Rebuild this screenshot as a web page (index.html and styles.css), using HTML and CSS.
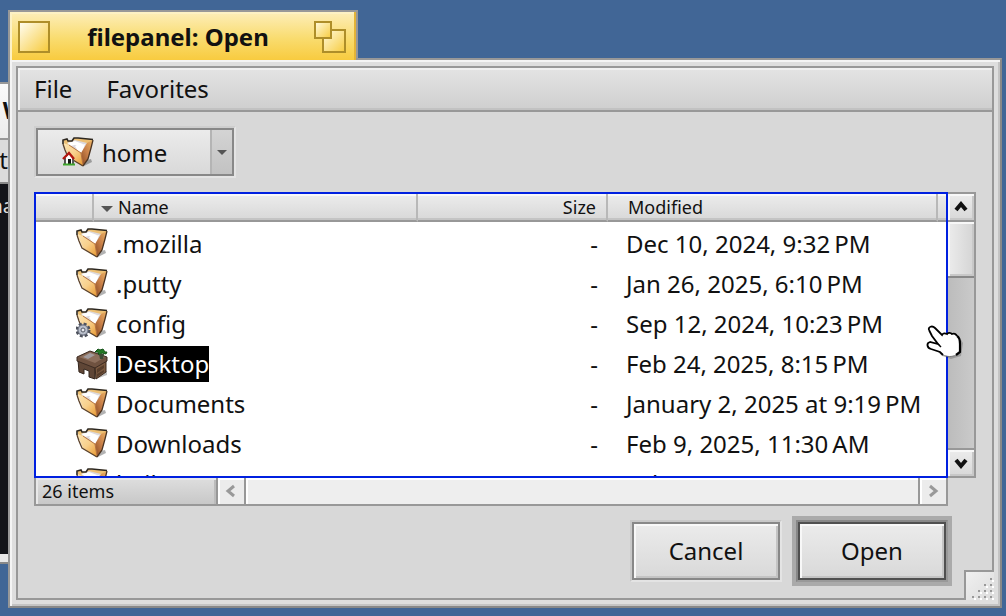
FILE: index.html
```html
<!DOCTYPE html>
<html lang="en">

<head>
    <meta charset="UTF-8">
    <meta name="viewport" content="width=device-width, initial-scale=1.0">
    <title>filepanel: Open</title>
    <link rel="stylesheet" href="styles.css">
</head>

<body>
    <!-- shared icons -->
    <svg class="defs" width="0" height="0" aria-hidden="true">
        <defs>
            <linearGradient id="front" x1="0" y1="0" x2="1" y2="1">
                <stop offset="0" stop-color="#fde6b4" />
                <stop offset="0.5" stop-color="#f8d08c" />
                <stop offset="1" stop-color="#e8962c" />
            </linearGradient>
            <linearGradient id="side" x1="1" y1="0" x2="0" y2="1">
                <stop offset="0" stop-color="#efb766" />
                <stop offset="0.5" stop-color="#c98049" />
                <stop offset="1" stop-color="#8a4a22" />
            </linearGradient>
            <symbol id="folder" viewBox="0 0 32 32">
                <path d="M22 29l8-4-1-3-4 1z" fill="#000" opacity="0.3" />
                <path d="M1 3l4-1 1 2 4 0 2-3 19 1-2 8-3 12-5 7-13-9-4-9z" fill="#edc074" />
                <path d="M5 6l8-3 12 3-4 16-6-6z" fill="#dcd9de" />
                <path d="M6 6l7-2 8 3-2 4-6-3-5 1z" fill="#fff" />
                <path d="M13 9l10-2-4 12z" fill="#fff" />
                <path d="M31 3l-6 3-6 10 2 12 5-6z" fill="url(#side)" />
                <path d="M1 6l6 2 12 8 2 13-14-9z" fill="url(#front)" />
                <path d="M7 8l12 8 2 12" fill="none" stroke="#b4713f" stroke-width="1" />
                <path d="M1 7V3l4-1 1 2 4 0 2-3 4 0 15 1.500" fill="none" stroke="#2c2720" stroke-width="1.6" />
                <path d="M31 3l-2 8-3 11-5 7" fill="none" stroke="#4a3322" stroke-width="1.3" />
                <path d="M1 7l2 6 3 7 15 9" fill="none" stroke="#5b4129" stroke-width="1.3" />
            </symbol>
            <symbol id="gear" viewBox="0 0 32 32">
                <circle cx="7" cy="22" r="6" fill="#a9afbd" stroke="#4d515c" stroke-width="3" stroke-dasharray="2.8 1.9" />
                <circle cx="7" cy="22" r="5" fill="#b9bfcb" stroke="#6d7280" stroke-width="1" />
                <circle cx="7" cy="22" r="2" fill="#e8eaf0" stroke="#555a66" stroke-width="1" />
            </symbol>
            <symbol id="house" viewBox="0 0 32 32">
                <path d="M3 21l4-4 5 4v7H3z" fill="#fff" />
                <path d="M3 21v7M11 21v7" stroke="#222" stroke-width="1.5" />
                <path d="M6 22h3v5H6z" fill="#111" />
                <path d="M1 22l6-6 5 6" fill="none" stroke="#b11710" stroke-width="2.4" />
                <path d="M1 27.500h12" stroke="#3ea52c" stroke-width="2" />
            </symbol>
            <symbol id="desk" viewBox="0 0 32 32">
                <path d="M20 31l11-4v-4l-9 3z" fill="#000" opacity="0.25" />
                <path d="M2 12l17 6v13l-6-2v-6l-5-2v5l-5-2z" fill="#5f4636" stroke="#33251c" />
                <path d="M19 18l11-7v13l-10 7z" fill="#79583f" stroke="#3d2b1f" />
                <path d="M21 21l7-4v3l-7 5zM21 26l7-4v2l-7 5z" fill="#573d2b" />
                <path d="M1 9l13-6 17 6v4l-12 7L1 13z" fill="#6f5240" stroke="#3d2c22" />
                <path d="M3 9l11-5 15 5-10 6z" fill="#8d6f5c" />
                <path d="M7 9l7-4 5 2-7 4z" fill="#a29c9e" />
                <path d="M19 4l3-3 2 1 3-1 2 3h2l-1 2-4-1-3 2-1-3z" fill="#237a25" stroke="#155218" />
                <path d="M23 6h5l-1 5h-3z" fill="#3d4a35" />
            </symbol>
        </defs>
    </svg>

    <!-- window behind, only its left edge shows -->
    <div class="back-window" aria-hidden="true">
        <div class="back-menu">W</div>
        <div class="back-tab">t</div>
        <div class="back-terminal">na</div>
    </div>

    <main class="window">
        <header class="tab">
            <button class="close" aria-label="Close"></button>
            <h1>filepanel: Open</h1>
            <button class="zoom" aria-label="Zoom">
                <svg width="32" height="32" viewBox="0 0 32 32">
                    <defs>
                        <linearGradient id="gold" x1="0" y1="0" x2="1" y2="1">
                            <stop offset="0" stop-color="#fffbe0" />
                            <stop offset="1" stop-color="#f7cb3e" />
                        </linearGradient>
                    </defs>
                    <rect x="9" y="9" width="22" height="22" fill="url(#gold)" stroke="#ae8e29" stroke-width="2" />
                    <rect x="1" y="1" width="16" height="16" fill="url(#gold)" stroke="#ae8e29" stroke-width="2" />
                </svg>
            </button>
        </header>

        <div class="frame">
            <div class="content">
                <nav class="menubar">
                    <button>File</button>
                    <button>Favorites</button>
                </nav>

                <div class="panel">
                    <button class="location">
                        <span class="location-name">
                            <svg class="icon" viewBox="0 0 32 32"><use href="#folder" /><use href="#house" /></svg>
                            home
                        </span>
                        <span class="location-arrow"><i class="triangle"></i></span>
                    </button>

                    <div class="browser">
                        <div class="list">
                            <table>
                                <colgroup>
                                    <col class="col-icon">
                                    <col>
                                    <col class="col-size">
                                    <col class="col-modified">
                                    <col class="col-end">
                                </colgroup>
                                <thead>
                                    <tr>
                                        <th></th>
                                        <th class="name"><i class="triangle sort"></i>Name</th>
                                        <th class="size">Size</th>
                                        <th class="modified">Modified</th>
                                        <th></th>
                                    </tr>
                                </thead>
                                <tbody>
                                    <tr>
                                        <td colspan="2"><div class="file"><svg class="icon" viewBox="0 0 32 32"><use href="#folder" /></svg><span>.mozilla</span></div></td>
                                        <td class="size">-</td>
                                        <td class="modified" colspan="2">Dec 10, 2024, 9:32&#8239;PM</td>
                                    </tr>
                                    <tr>
                                        <td colspan="2"><div class="file"><svg class="icon" viewBox="0 0 32 32"><use href="#folder" /></svg><span>.putty</span></div></td>
                                        <td class="size">-</td>
                                        <td class="modified" colspan="2">Jan 26, 2025, 6:10&#8239;PM</td>
                                    </tr>
                                    <tr>
                                        <td colspan="2"><div class="file"><svg class="icon" viewBox="0 0 32 32"><use href="#folder" /><use href="#gear" /></svg><span>config</span></div></td>
                                        <td class="size">-</td>
                                        <td class="modified" colspan="2">Sep 12, 2024, 10:23&#8239;PM</td>
                                    </tr>
                                    <tr>
                                        <td colspan="2"><div class="file selected"><svg class="icon" viewBox="0 0 32 32"><use href="#desk" /></svg><span>Desktop</span></div></td>
                                        <td class="size">-</td>
                                        <td class="modified" colspan="2">Feb 24, 2025, 8:15&#8239;PM</td>
                                    </tr>
                                    <tr>
                                        <td colspan="2"><div class="file"><svg class="icon" viewBox="0 0 32 32"><use href="#folder" /></svg><span>Documents</span></div></td>
                                        <td class="size">-</td>
                                        <td class="modified" colspan="2">January 2, 2025 at 9:19&#8239;PM</td>
                                    </tr>
                                    <tr>
                                        <td colspan="2"><div class="file"><svg class="icon" viewBox="0 0 32 32"><use href="#folder" /></svg><span>Downloads</span></div></td>
                                        <td class="size">-</td>
                                        <td class="modified" colspan="2">Feb 9, 2025, 11:30&#8239;AM</td>
                                    </tr>
                                    <tr>
                                        <td colspan="2"><div class="file"><svg class="icon" viewBox="0 0 32 32"><use href="#folder" /></svg><span>haiku</span></div></td>
                                        <td class="size">-</td>
                                        <td class="modified" colspan="2">Feb 9, 2025</td>
                                    </tr>
                                </tbody>
                            </table>
                        </div>

                        <div class="vscroll">
                            <button aria-label="Scroll up"><svg width="16" height="14" viewBox="0 0 16 14"><path d="M3 10l5-6 5 6" /></svg></button>
                            <div class="thumb"></div>
                            <div class="track"></div>
                            <button aria-label="Scroll down"><svg width="16" height="14" viewBox="0 0 16 14"><path d="M3 4l5 6 5-6" /></svg></button>
                        </div>

                        <div class="bottom">
                            <div class="status">26 items</div>
                            <button aria-label="Scroll left"><svg width="14" height="16" viewBox="0 0 14 16"><path d="M10 3L4 8l6 5" /></svg></button>
                            <div class="htrack"></div>
                            <button aria-label="Scroll right"><svg width="14" height="16" viewBox="0 0 14 16"><path d="M4 3l6 5-6 5" /></svg></button>
                        </div>
                    </div>

                    <div class="actions">
                        <button class="action">Cancel</button>
                        <span class="default-ring"><button class="action">Open</button></span>
                    </div>
                </div>

                <div class="resize">
                    <svg width="28" height="28" viewBox="0 0 28 28">
                        <path d="M26 8h2v2h-2zM20 14h2v2h-2zM26 14h2v2h-2zM14 20h2v2h-2zM20 20h2v2h-2zM26 20h2v2h-2zM8 26h2v2H8zM14 26h2v2h-2zM20 26h2v2h-2zM26 26h2v2h-2z" fill="#fff" />
                        <path d="M24 6h2v2h-2zM18 12h2v2h-2zM24 12h2v2h-2zM12 18h2v2h-2zM18 18h2v2h-2zM24 18h2v2h-2zM6 24h2v2H6zM12 24h2v2h-2zM18 24h2v2h-2zM24 24h2v2h-2z" fill="#989898" />
                    </svg>
                </div>
            </div>
        </div>
    </main>

    <!-- hand pointer -->
    <svg class="pointer" width="38" height="36" viewBox="0 0 38 36" aria-hidden="true">
        <path d="M7 22l9 9 9 3 10-3 2-13-3-5z" fill="#000" opacity="0.2" />
        <path d="M3 5C2 2 6 0 9 3l7 7c1-2 3-2 5-1 1-2 4-1 5 0 2-1 4 0 5 2 2 1 3 4 3 8v8c-3 4-8 5-12 4-4 0-6-2-8-4l-9-3c-4-1-5-6-1-7l8 2z" fill="#fff" />
        <path d="M3 5C2 2 6 0 9 3l7 7c1-2 3-2 5-1 1-2 4-1 5 0 2-1 4 0 5 2" fill="none" stroke="#000" stroke-width="1.8" />
        <path d="M3 5l3 6 6 8-8-2c-4 1-3 6 1 7l9 3 3 3" fill="none" stroke="#000" stroke-width="1.8" />
        <path d="M12 19l3 3" stroke="#000" stroke-width="1.5" />
        <path d="M31 11c2 1 3 4 3 8v8l-4 3" fill="none" stroke="#000" stroke-width="2.2" />
        <path d="M17 30c4 2 9 2 13 0" fill="none" stroke="#777" stroke-width="1" />
    </svg>
</body>

</html>
```
FILE: styles.css
```css
* {
    box-sizing: border-box;
}

body {
    margin: 0;
    padding: 10px 4px 8px 8px;
    min-height: 100vh;
    overflow: hidden;
    background: #416696;
    color: #111;
    font-family: "Noto Sans", sans-serif;
    font-size: 24px;
    line-height: 36px;
}

button {
    margin: 0;
    padding: 0;
    border: none;
    background: none;
    color: inherit;
    font: inherit;
}

svg {
    display: block;
}

.defs {
    position: absolute;
}

/* window behind */
.back-window {
    position: absolute;
    left: -40px;
    top: 82px;
    width: 70px;
    background: #e8e8e8;
    border-top: 2px solid #989898;
    border-bottom: 2px solid #888;
    box-shadow: inset 0 2px #fff;
    text-align: right;
}

.back-menu {
    height: 56px;
    padding: 8px 4px;
    border-bottom: 2px solid #989898;
    background: linear-gradient(#fafafa, #ececec);
    font-weight: bold;
}

.back-tab {
    height: 44px;
    padding: 2px 22px;
    border-bottom: 2px solid #888;
    background: #dcdcdc;
}

.back-terminal {
    height: 370px;
    margin-bottom: 8px;
    padding: 4px 16px;
    background: #131419;
    color: #ddd;
    font-size: 20px;
}

/* window */
.window {
    position: relative;
}

.tab {
    display: flex;
    align-items: center;
    justify-content: space-between;
    width: 350px;
    height: 50px;
    margin-bottom: -2px;
    padding: 2px 10px 0 8px;
    position: relative;
    border: 2px solid #989898;
    border-bottom: none;
    background: linear-gradient(#fdeeba, #f9dc6f 55%, #f8cb3f);
    box-shadow: inset -2px 0 #e3b337, inset 2px 2px #fdf1c4;
}

.tab h1 {
    margin: 0 8px 0 0;
    font-size: 24px;
    font-weight: bold;
    color: #111;
}

.close {
    width: 32px;
    height: 32px;
    border: 2px solid #ae8e29;
    background: linear-gradient(135deg, #fffdf0, #f7cb3e);
}

.frame {
    padding: 6px;
    border: 2px solid #888;
    border-color: #989898 #888 #888 #989898;
    background: #dedede;
    box-shadow: inset 2px 2px #f4f4f4, inset -2px -2px #c4c4c4;
}

.content {
    position: relative;
    border: 2px solid #989898;
    background: #d8d8d8;
}

.menubar {
    display: flex;
    gap: 34px;
    height: 44px;
    padding: 3px 16px;
    border-bottom: 2px solid #989898;
    background: linear-gradient(#e4e4e4, #cfcfcf);
    box-shadow: inset 2px 2px #f0f0f0, inset 0 -2px #c2c2c2;
}

.panel {
    padding: 14px 16px 12px;
}

.location {
    display: flex;
    width: 202px;
    height: 52px;
    border: 2px solid #cecece;
    outline: 2px solid #888;
    outline-offset: -4px;
    border-right-color: #e4e4e4;
    border-bottom-color: #e4e4e4;
    padding: 2px;
    background: linear-gradient(#ececec, #d8d8d8);
}

.location-name {
    flex: 1;
    display: flex;
    align-items: center;
    gap: 8px;
    height: 46px;
    padding-left: 24px;
}

.location-arrow {
    display: flex;
    align-items: center;
    justify-content: center;
    width: 22px;
    height: 44px;
    border-left: 2px solid #b4b4b4;
    background: linear-gradient(#d4d4d4, #c2c2c2);
}

.triangle {
    border: 5px solid transparent;
    border-top-color: #555;
    border-bottom: none;
}

.icon {
    flex: none;
    width: 32px;
    height: 32px;
}

/* file list */
.browser {
    display: grid;
    grid-template-columns: 1fr 28px;
    margin-top: 14px;
}

.list {
    height: 286px;
    overflow: hidden;
    border: 2px solid #0020e0;
    background: #fff;
}

table {
    width: 100%;
    table-layout: fixed;
    border-collapse: separate;
    border-spacing: 0;
}

.col-icon {
    width: 58px;
}

.col-size {
    width: 190px;
}

.col-modified {
    width: 330px;
}

.col-end {
    width: 8px;
}

th {
    height: 28px;
    padding: 0;
    border-right: 2px solid #b8b8b8;
    border-bottom: 2px solid #989898;
    background: linear-gradient(#ececec, #d8d8d8);
    box-shadow: inset 0 2px #f8f8f8, inset 0 -2px #c4c4c4;
    font-size: 18px;
    font-weight: normal;
    line-height: 26px;
    text-align: left;
}

th:last-child {
    border-right: none;
}

th.name {
    padding-left: 7px;
}

.sort {
    display: inline-block;
    margin-right: 5px;
    border-width: 6px;
    vertical-align: middle;
}

.size {
    padding: 0 10px;
    text-align: right;
}

th.modified {
    padding-left: 20px;
}

td {
    height: 40px;
    padding: 0;
    white-space: nowrap;
}

td.modified {
    padding-left: 18px;
}

tbody {
    line-height: 40px;
}

tbody::before {
    content: "";
    display: block;
    height: 2px;
}

.file {
    display: flex;
    align-items: center;
    gap: 8px;
    padding-left: 40px;
}

.file span {
    line-height: 36px;
}

.selected span {
    background: #000;
    color: #fff;
}

/* scroll bars */
.vscroll {
    display: flex;
    flex-direction: column;
    border: 2px solid #989898;
    border-left: none;
}

.vscroll button,
.bottom button {
    display: flex;
    align-items: center;
    justify-content: center;
    width: 26px;
    height: 26px;
    background: linear-gradient(#ececec, #d8d8d8);
    box-shadow: inset 2px 2px #f8f8f8, inset -2px -2px #c8c8c8;
}

.vscroll path,
.bottom path {
    fill: none;
    stroke: #111;
    stroke-width: 4;
}

.thumb {
    height: 58px;
    border-top: 2px solid #989898;
    border-bottom: 2px solid #888;
    background: linear-gradient(90deg, #ececec, #d4d4d4);
    box-shadow: inset 2px 2px #f8f8f8, inset -2px -2px #c8c8c8;
}

.track {
    flex: 1;
    border-bottom: 2px solid #989898;
    background: linear-gradient(90deg, #bcbcbc, #cacaca);
}

.bottom {
    display: flex;
    height: 28px;
    border: 2px solid #989898;
    border-top: none;
}

.bottom button {
    background: #ececec;
    box-shadow: inset 2px 2px #fff;
}

.bottom path {
    stroke: #999;
    stroke-width: 3;
}

.status {
    width: 182px;
    padding-left: 6px;
    border-right: 2px solid #989898;
    background: linear-gradient(#dedede, #c8c8c8);
    box-shadow: inset 2px 2px #e8e8e8, inset -2px 0 #bcbcbc;
    font-size: 18px;
    line-height: 26px;
}

.htrack {
    flex: 1;
    border: solid #989898;
    border-width: 0 2px;
    background: #eee;
    box-shadow: inset 2px 2px #fff;
}

/* dialog buttons */
.actions {
    display: flex;
    align-items: center;
    justify-content: flex-end;
    gap: 10px;
    margin-top: 10px;
    padding-right: 24px;
}

.action {
    width: 152px;
    height: 62px;
    border: 2px solid #c8c8c8;
    border-right-color: #e4e4e4;
    border-bottom-color: #e4e4e4;
    outline: 2px solid #888;
    outline-offset: -4px;
    background: linear-gradient(#ececec, #d8d8d8);
    box-shadow: inset 4px 4px #f8f8f8, inset -4px -4px #c4c4c4;
}

.default-ring {
    padding: 4px;
    background: #aaa;
}

.default-ring .action {
    display: block;
    border-color: #888 #999 #999 #888;
    outline-color: #505050;
}

.resize {
    position: absolute;
    right: -2px;
    bottom: -2px;
    width: 30px;
    height: 30px;
    border: 2px solid #989898;
    border-right: none;
    border-bottom: none;
    background: linear-gradient(135deg, #f0f0f0, #dcdcdc);
}

.pointer {
    position: absolute;
    left: 926px;
    top: 325px;
}
```
